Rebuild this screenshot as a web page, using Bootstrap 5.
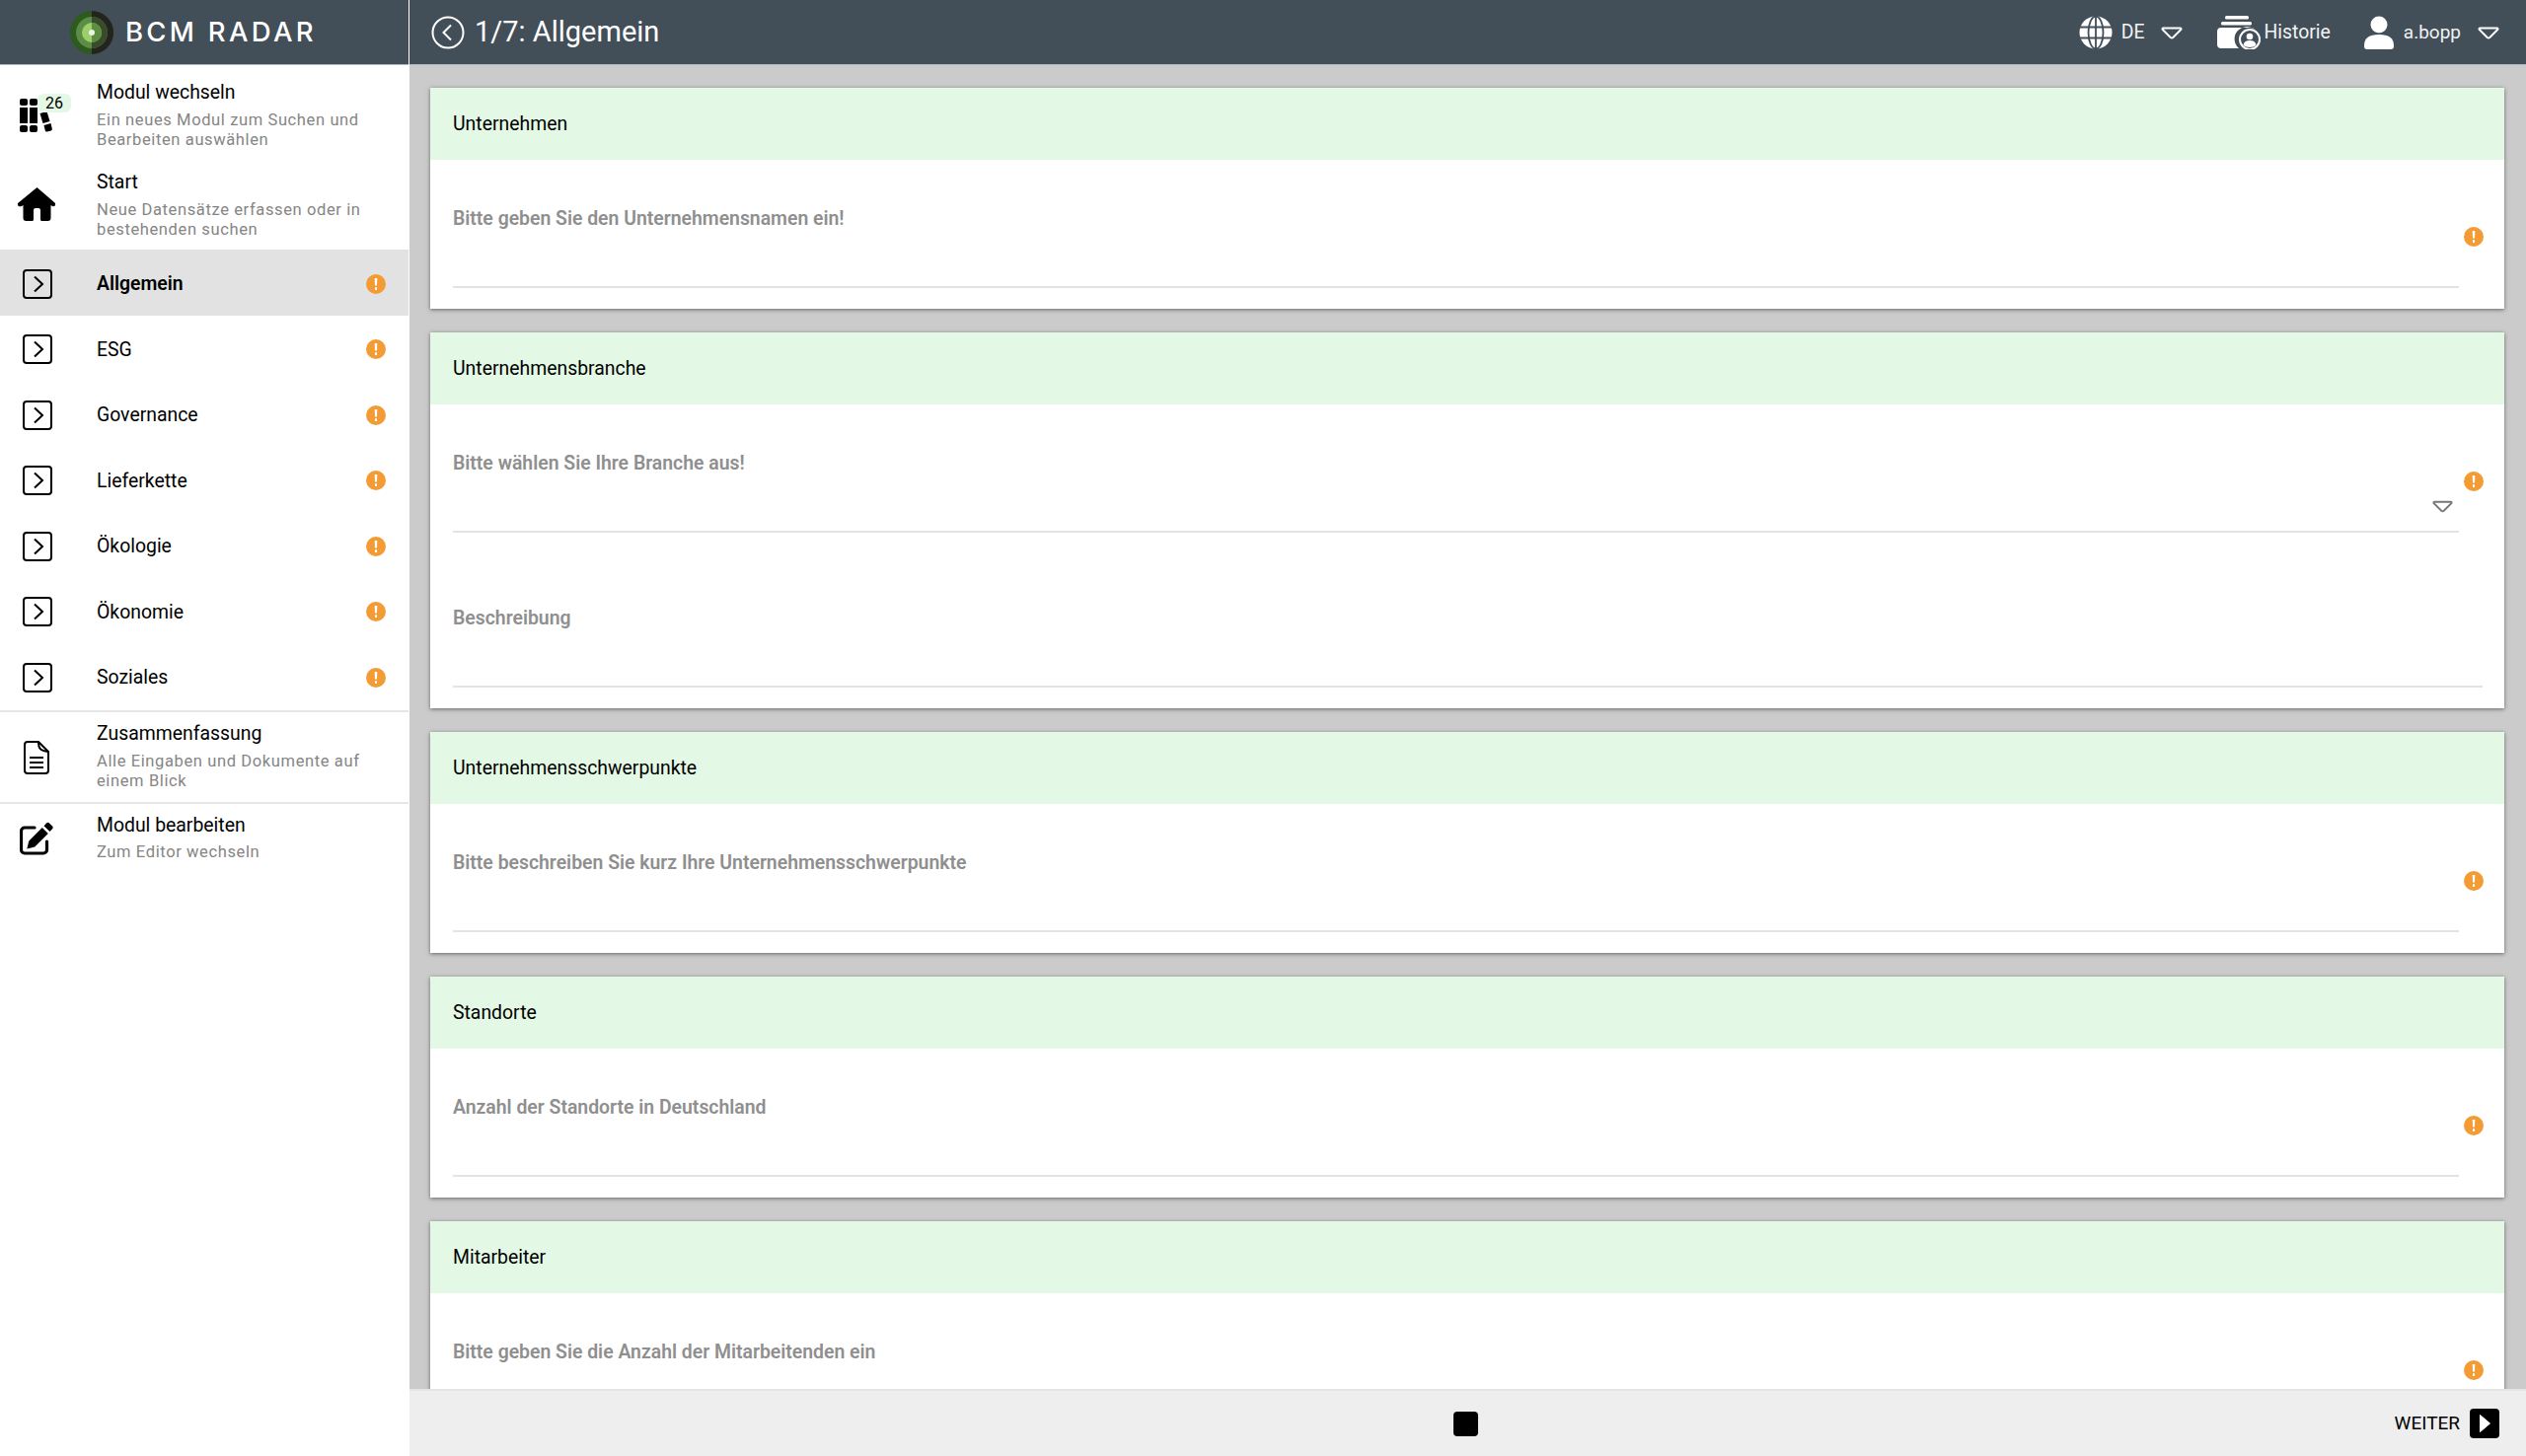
<!DOCTYPE html>
<html lang="de">
<head>
<meta charset="utf-8">
<title>BCM RADAR</title>
<link href="https://cdn.jsdelivr.net/npm/bootstrap@5.3.0/dist/css/bootstrap.min.css" rel="stylesheet">
<style>
html,body{height:100%;margin:0;overflow:hidden}
body{font-family:Roboto,"Liberation Sans",sans-serif;font-size:19.4px;color:#000;background:#cbcbcb}
.shell{height:1476px}
.side{width:414px;flex:none;background:#fff;position:relative;z-index:2}
.brand{height:66px;background:#424e58;padding-left:70px;gap:11px;box-shadow:inset 0 -1px 0 #b5b9bc}
.brand-txt{font-family:Inter,Roboto,sans-serif;font-size:27.5px;font-weight:500;letter-spacing:3.3px;color:#fff;line-height:1}
.side-nav{padding-top:5px}
.itm{display:flex;height:91px;color:#000;text-decoration:none}
.itm-ico{width:98px;flex:none;display:flex;justify-content:center;padding-right:24px}
.ic-books{margin-top:29px}
.ic-home{margin-top:28px}
.ic-doc{margin-top:29px}
.ic-edit{margin-top:18px}
.itm-t{font-size:19.4px;line-height:22px;padding-top:12px}
.itm-s{font-size:16.5px;line-height:20px;color:#858585;letter-spacing:.62px;margin-top:7px;width:310px}
.itm-low .itm-t{padding-top:11px}
.itm-edit .itm-t{padding-top:11px}
.itm-edit .itm-s{margin-top:6px}
.cnt{left:38px;top:24px;width:34px;height:19px;background:#e4f9e5;border-radius:6px;font-size:16px;line-height:19px;text-align:center}
.rw{display:flex;align-items:center;height:66.5px;padding-top:3px;color:#000;text-decoration:none;position:relative}
.rw.on{background:#e2e2e2;font-weight:600}
.rw-ico{width:98px;flex:none;padding-left:23px;display:flex}
.rw .alrt{margin-left:auto;margin-right:23px}
.sep{border-top:2px solid #e6e6e6}
.sep-first{margin-top:1px}
.alrt{width:20px;height:20px;border-radius:50%;background:#f39c36;color:#fff;flex:none;display:flex;align-items:center;justify-content:center}
.mainc{min-width:0;background:#cbcbcb;border-left:1px solid #fff}
.topb{height:66px;flex:none;background:#424e58;color:#fff;padding:0 27px 0 22px;box-shadow:inset 0 -1px 0 #b5b9bc;position:relative;z-index:1}
.topb-t{font-size:29px;line-height:1;margin-left:10px;padding-bottom:2px}
.topb-i{font-size:19.4px;color:#f1f3f4}
.gp-de{margin-left:9px}
.gp-tri1{margin-left:17px}
.gp-folder{margin-left:35px}
.gp-hist{margin-left:3px}
.gp-user{margin-left:34px}
.gp-name{margin-left:10px;font-size:19px}
.gp-tri2{margin-left:17px}
.scroller{flex:1 1 0;min-height:0;overflow:hidden;padding:23px 22px 0 21px}
.cardx{background:#fff;box-shadow:0 1px 4px rgba(0,0,0,.5);margin-bottom:24px}
.cardx-h{height:73px;background:#e4f9e5;padding:1px 0 0 23px;display:flex;align-items:center;font-size:19.4px}
.cardx-b{padding:0 22px 21px 23px}
.fldrow{display:flex}
.fldrow+.fldrow{margin-top:27px}
.fld{flex:1 1 0;height:130px;padding-top:51px;border-bottom:2px solid #e3e3e3;position:relative;font-weight:600;color:#8f8f8f;line-height:18px}
.slot{width:25px;flex:none;display:flex;justify-content:flex-end;padding-top:68px;margin-right:-1px}
.caret{position:absolute;right:6px;bottom:18px;display:flex}
.footb{height:68px;flex:none;background:#eeeeee;border-top:2px solid #e4e4e4;position:relative;padding-right:27px}
.stop{width:25px;height:25px;background:#000;border-radius:4px;position:absolute;left:1058px;top:21px}
.wtr{font-size:19px;margin-right:10px;font-weight:400;line-height:1;padding-bottom:1px}
</style>
</head>
<body>
<div class="shell d-flex">
  <aside class="side d-flex flex-column">
    <div class="brand d-flex align-items-center">
      <svg width="46" height="46" viewBox="0 0 46 46" aria-hidden="true">
        <circle cx="23" cy="23" r="22" fill="#2d5a1e"/>
        <path d="M23 1a22 22 0 0 1 0 44z" fill="#24241f"/>
        <circle cx="23" cy="23" r="16" fill="#5c8c45"/>
        <path d="M23 7a16 16 0 0 1 0 32z" fill="#3a4a2c"/>
        <circle cx="23" cy="23" r="10" fill="#9bcf6b"/>
        <path d="M23 13a10 10 0 0 1 0 20z" fill="#5d8d3f"/>
        <circle cx="23" cy="23" r="3" fill="#eef6e2"/>
      </svg>
      <span class="brand-txt">BCM RADAR</span>
    </div>
    <nav class="side-nav">
      <a class="itm" href="#">
        <div class="itm-ico position-relative">
          <svg class="ic-books" width="36" height="34" viewBox="0 0 36 34" aria-hidden="true"><g fill="#000"><rect x="1" y="0" width="8" height="7" rx="2"/><rect x="1" y="9" width="8" height="16"/><rect x="1" y="27" width="8" height="7" rx="2"/><rect x="11" y="0" width="8" height="7" rx="2"/><rect x="11" y="9" width="8" height="16"/><rect x="11" y="27" width="8" height="7" rx="2"/><path d="M21.500 15l7-2 3 10-7 2zM25.500 27l7-2 1.300 5.500q.4 1.500-1 2l-4 1q-1.500.4-2-1z"/></g></svg>
          <span class="position-absolute cnt">26</span>
        </div>
        <div><div class="itm-t">Modul wechseln</div><div class="itm-s">Ein neues Modul zum Suchen und Bearbeiten auswählen</div></div>
      </a>
      <a class="itm" href="#">
        <div class="itm-ico">
          <svg class="ic-home" width="38" height="34" viewBox="0 0 38 34" aria-hidden="true"><path fill="#000" d="M19 0 37 15.500q1.500 1.600.2 3-1 1-2.700.5L33 18v13q0 3-3 3h-6q-1.500 0-1.500-1.500V23q0-2-2-2h-3q-2 0-2 2v9.500Q15.500 34 14 34H8q-3 0-3-3V18l-1.500 1C2 19.500.8 19.500-.2 18.500c-1-1.400-.5-2.300.4-3z" transform="translate(.5 0)"/></svg>
        </div>
        <div><div class="itm-t">Start</div><div class="itm-s">Neue Datensätze erfassen oder in bestehenden suchen</div></div>
      </a>
      <a class="rw on" href="#"><span class="rw-ico"><svg width="30" height="30" viewBox="0 0 30 30" aria-hidden="true"><rect x="1" y="1" width="28" height="28" rx="3" fill="none" stroke="#000" stroke-width="2"/><path d="M12 7.500 20 15l-8 7.500" fill="none" stroke="#000" stroke-width="2"/></svg></span>Allgemein<span class="alrt"><svg width="4" height="12" viewBox="0 0 4 12" aria-hidden="true"><path fill="#fff" d="M.7 0h2.600L3 7.500H1zM1 9.300h2V12H1z"/></svg></span></a>
      <a class="rw" href="#"><span class="rw-ico"><svg width="30" height="30" viewBox="0 0 30 30" aria-hidden="true"><rect x="1" y="1" width="28" height="28" rx="3" fill="none" stroke="#000" stroke-width="2"/><path d="M12 7.500 20 15l-8 7.500" fill="none" stroke="#000" stroke-width="2"/></svg></span>ESG<span class="alrt"><svg width="4" height="12" viewBox="0 0 4 12" aria-hidden="true"><path fill="#fff" d="M.7 0h2.600L3 7.500H1zM1 9.300h2V12H1z"/></svg></span></a>
      <a class="rw" href="#"><span class="rw-ico"><svg width="30" height="30" viewBox="0 0 30 30" aria-hidden="true"><rect x="1" y="1" width="28" height="28" rx="3" fill="none" stroke="#000" stroke-width="2"/><path d="M12 7.500 20 15l-8 7.500" fill="none" stroke="#000" stroke-width="2"/></svg></span>Governance<span class="alrt"><svg width="4" height="12" viewBox="0 0 4 12" aria-hidden="true"><path fill="#fff" d="M.7 0h2.600L3 7.500H1zM1 9.300h2V12H1z"/></svg></span></a>
      <a class="rw" href="#"><span class="rw-ico"><svg width="30" height="30" viewBox="0 0 30 30" aria-hidden="true"><rect x="1" y="1" width="28" height="28" rx="3" fill="none" stroke="#000" stroke-width="2"/><path d="M12 7.500 20 15l-8 7.500" fill="none" stroke="#000" stroke-width="2"/></svg></span>Lieferkette<span class="alrt"><svg width="4" height="12" viewBox="0 0 4 12" aria-hidden="true"><path fill="#fff" d="M.7 0h2.600L3 7.500H1zM1 9.300h2V12H1z"/></svg></span></a>
      <a class="rw" href="#"><span class="rw-ico"><svg width="30" height="30" viewBox="0 0 30 30" aria-hidden="true"><rect x="1" y="1" width="28" height="28" rx="3" fill="none" stroke="#000" stroke-width="2"/><path d="M12 7.500 20 15l-8 7.500" fill="none" stroke="#000" stroke-width="2"/></svg></span>Ökologie<span class="alrt"><svg width="4" height="12" viewBox="0 0 4 12" aria-hidden="true"><path fill="#fff" d="M.7 0h2.600L3 7.500H1zM1 9.300h2V12H1z"/></svg></span></a>
      <a class="rw" href="#"><span class="rw-ico"><svg width="30" height="30" viewBox="0 0 30 30" aria-hidden="true"><rect x="1" y="1" width="28" height="28" rx="3" fill="none" stroke="#000" stroke-width="2"/><path d="M12 7.500 20 15l-8 7.500" fill="none" stroke="#000" stroke-width="2"/></svg></span>Ökonomie<span class="alrt"><svg width="4" height="12" viewBox="0 0 4 12" aria-hidden="true"><path fill="#fff" d="M.7 0h2.600L3 7.500H1zM1 9.300h2V12H1z"/></svg></span></a>
      <a class="rw" href="#"><span class="rw-ico"><svg width="30" height="30" viewBox="0 0 30 30" aria-hidden="true"><rect x="1" y="1" width="28" height="28" rx="3" fill="none" stroke="#000" stroke-width="2"/><path d="M12 7.500 20 15l-8 7.500" fill="none" stroke="#000" stroke-width="2"/></svg></span>Soziales<span class="alrt"><svg width="4" height="12" viewBox="0 0 4 12" aria-hidden="true"><path fill="#fff" d="M.7 0h2.600L3 7.500H1zM1 9.300h2V12H1z"/></svg></span></a>
      <div class="sep sep-first"></div>
      <a class="itm itm-low" href="#">
        <div class="itm-ico"><svg class="ic-doc" width="26" height="34" viewBox="0 0 26 34" aria-hidden="true"><path d="M4 1h11l10 10v19a3 3 0 0 1-3 3H4a3 3 0 0 1-3-3V4a3 3 0 0 1 3-3z" fill="none" stroke="#000" stroke-width="2" stroke-linejoin="round"/><path d="M15 1c0 6 1 9 10 10" fill="none" stroke="#000" stroke-width="2"/><path d="M6 17h14M6 22h14M6 27h14" stroke="#000" stroke-width="2"/></svg></div>
        <div><div class="itm-t">Zusammenfassung</div><div class="itm-s">Alle Eingaben und Dokumente auf einem Blick</div></div>
      </a>
      <div class="sep"></div>
      <a class="itm itm-edit" href="#">
        <div class="itm-ico"><svg class="ic-edit" width="34" height="34" viewBox="0 0 34 34" aria-hidden="true"><path d="M15 6H5a3.500 3.500 0 0 0-3.500 3.500v19A3.500 3.500 0 0 0 5 32h19a3.500 3.500 0 0 0 3.500-3.500V20" fill="none" stroke="#000" stroke-width="3.200" stroke-linecap="round"/><path fill="#000" d="M27 1.500q1.600-1.200 3-.1l3.200 3q1 1.300-.1 2.800L30.500 10l-6-5.800zM22.800 6l6 6-13.500 13.500-8 2 2-8z"/></svg></div>
        <div><div class="itm-t">Modul bearbeiten</div><div class="itm-s">Zum Editor wechseln</div></div>
      </a>
    </nav>
  </aside>

  <div class="mainc flex-grow-1 d-flex flex-column">
    <header class="topb d-flex align-items-center">
      <svg width="34" height="34" viewBox="0 0 34 34" aria-hidden="true"><circle cx="17" cy="17" r="15.500" fill="none" stroke="#fff" stroke-width="2"/><path d="M20 9.500 12.500 17l7.500 7.500" fill="none" stroke="#fff" stroke-width="2"/></svg>
      <span class="topb-t">1/7: Allgemein</span>
      <div class="topb-i ms-auto d-flex align-items-center">
        <svg width="34" height="34" viewBox="0 0 34 34" aria-hidden="true"><circle cx="17" cy="17" r="16.500" fill="#fff"/><g fill="none" stroke="#424e58" stroke-width="1.800"><ellipse cx="17" cy="17" rx="7.500" ry="16.500"/><path d="M17 .5v33M1 11.500h32M1 22.500h32"/></g></svg>
        <span class="gp-de">DE</span>
        <svg class="gp-tri1" width="22" height="13" viewBox="0 0 22 13" aria-hidden="true"><path d="M2.500 1.500h17q1.500.2.800 1.500l-8 8q-1.300 1-2.600 0l-8-8q-.7-1.300.8-1.500z" fill="none" stroke="#fff" stroke-width="2"/></svg>
        <svg class="gp-folder" width="44" height="34" viewBox="0 0 44 34" aria-hidden="true"><g fill="#fff"><rect x="8" y="0" width="24" height="3.500" rx="1.500"/><rect x="4" y="6" width="31" height="3.500" rx="1.500"/><path d="M4 12h30q3 0 4 2a12 12 0 0 0-16 19H4q-4 0-4-4V16q0-4 4-4z"/><circle cx="33" cy="24" r="10" fill="none" stroke="#fff" stroke-width="2"/><circle cx="33" cy="21" r="3.300"/><path d="M26.500 30q.5-5 6.500-5t6.500 5q-3 2-6.500 2t-6.500-2z"/></g></svg>
        <span class="gp-hist">Historie</span>
        <svg class="gp-user" width="30" height="34" viewBox="0 0 30 34" aria-hidden="true"><circle cx="15" cy="9" r="8.500" fill="#fff"/><path fill="#fff" d="M0 30q0-11 15-11t15 11v1q0 3-3 3H3q-3 0-3-3z"/></svg>
        <span class="gp-name">a.bopp</span>
        <svg class="gp-tri2" width="22" height="13" viewBox="0 0 22 13" aria-hidden="true"><path d="M2.500 1.500h17q1.500.2.800 1.500l-8 8q-1.300 1-2.600 0l-8-8q-.7-1.300.8-1.500z" fill="none" stroke="#fff" stroke-width="2"/></svg>
      </div>
    </header>

    <main class="scroller">
      <section class="cardx">
        <div class="cardx-h">Unternehmen</div>
        <div class="cardx-b">
          <div class="fldrow"><div class="fld">Bitte geben Sie den Unternehmensnamen ein!</div><div class="slot"><span class="alrt"><svg width="4" height="12" viewBox="0 0 4 12" aria-hidden="true"><path fill="#fff" d="M.7 0h2.600L3 7.500H1zM1 9.300h2V12H1z"/></svg></span></div></div>
        </div>
      </section>
      <section class="cardx">
        <div class="cardx-h">Unternehmensbranche</div>
        <div class="cardx-b">
          <div class="fldrow"><div class="fld">Bitte wählen Sie Ihre Branche aus!<span class="caret"><svg width="21" height="13" viewBox="0 0 22 13" aria-hidden="true"><path d="M2.500 1.500h17q1.500.2.800 1.500l-8 8q-1.300 1-2.600 0l-8-8q-.7-1.300.8-1.500z" fill="none" stroke="#777" stroke-width="2"/></svg></span></div><div class="slot"><span class="alrt"><svg width="4" height="12" viewBox="0 0 4 12" aria-hidden="true"><path fill="#fff" d="M.7 0h2.600L3 7.500H1zM1 9.300h2V12H1z"/></svg></span></div></div>
          <div class="fldrow"><div class="fld">Beschreibung</div></div>
        </div>
      </section>
      <section class="cardx">
        <div class="cardx-h">Unternehmensschwerpunkte</div>
        <div class="cardx-b">
          <div class="fldrow"><div class="fld">Bitte beschreiben Sie kurz Ihre Unternehmensschwerpunkte</div><div class="slot"><span class="alrt"><svg width="4" height="12" viewBox="0 0 4 12" aria-hidden="true"><path fill="#fff" d="M.7 0h2.600L3 7.500H1zM1 9.300h2V12H1z"/></svg></span></div></div>
        </div>
      </section>
      <section class="cardx">
        <div class="cardx-h">Standorte</div>
        <div class="cardx-b">
          <div class="fldrow"><div class="fld">Anzahl der Standorte in Deutschland</div><div class="slot"><span class="alrt"><svg width="4" height="12" viewBox="0 0 4 12" aria-hidden="true"><path fill="#fff" d="M.7 0h2.600L3 7.500H1zM1 9.300h2V12H1z"/></svg></span></div></div>
        </div>
      </section>
      <section class="cardx">
        <div class="cardx-h">Mitarbeiter</div>
        <div class="cardx-b">
          <div class="fldrow"><div class="fld">Bitte geben Sie die Anzahl der Mitarbeitenden ein</div><div class="slot"><span class="alrt"><svg width="4" height="12" viewBox="0 0 4 12" aria-hidden="true"><path fill="#fff" d="M.7 0h2.600L3 7.500H1zM1 9.300h2V12H1z"/></svg></span></div></div>
        </div>
      </section>
    </main>

    <footer class="footb d-flex align-items-center justify-content-end">
      <span class="stop"></span>
      <span class="wtr">WEITER</span>
      <svg width="30" height="30" viewBox="0 0 30 30" aria-hidden="true"><rect width="30" height="30" rx="4" fill="#000"/><path d="M10.500 6.500 20.500 15l-10 8.500z" fill="#fff" stroke="#fff" stroke-linejoin="round"/></svg>
    </footer>
  </div>
</div>
<script src="https://cdn.jsdelivr.net/npm/bootstrap@5.3.0/dist/js/bootstrap.bundle.min.js"></script>
</body>
</html>
